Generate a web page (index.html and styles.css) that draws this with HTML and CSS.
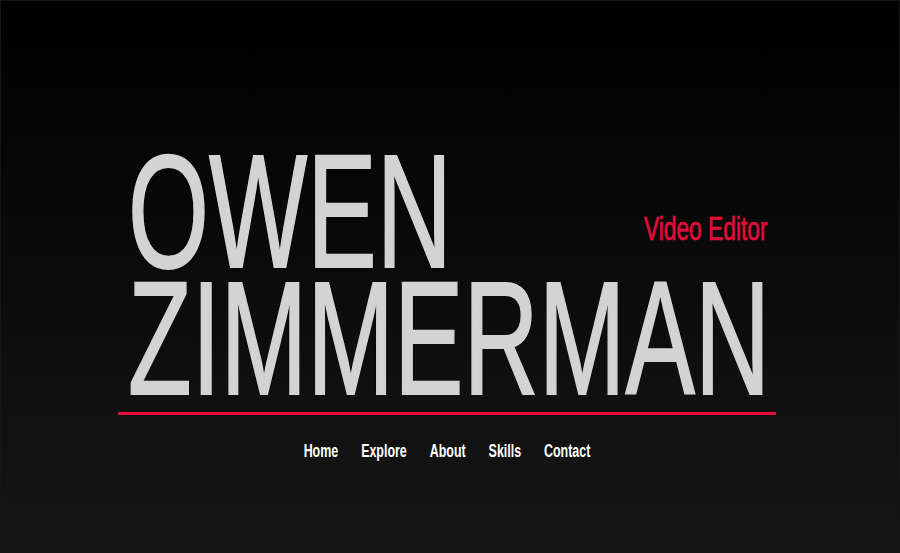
FILE: index.html
```html
<!DOCTYPE html>
<html lang="en">
<head>
<meta charset="utf-8">
<title>Owen Zimmerman — Video Editor</title>
<link rel="stylesheet" href="styles.css">
</head>
<body>
<main class="hero">
  <div class="wrap">
    <header class="title">
      <h1 class="name"><span class="line">OWEN</span><span class="line">ZIMMERMAN</span></h1>
      <p class="role"><span class="role-text">Video Editor</span></p>
    </header>
    <nav class="nav">
      <a href="#" class="nav-link">Home</a>
      <a href="#" class="nav-link">Explore</a>
      <a href="#" class="nav-link">About</a>
      <a href="#" class="nav-link">Skills</a>
      <a href="#" class="nav-link">Contact</a>
    </nav>
  </div>
</main>
</body>
</html>
```
FILE: styles.css
```css
html, body {
  margin: 0;
  padding: 0;
  height: 100%;
}
body {
  background: linear-gradient(180deg, #000000 0%, #161616 100%);
  font-family: "Liberation Sans", Arial, sans-serif;
  box-sizing: border-box;
  border: 1px solid #161616;
  overflow: hidden;
}
.hero {
  display: flex;
  justify-content: center;
  padding-top: 146px;
}
.wrap {
  width: 658px;
  margin-left: -6px;
}
.title {
  display: grid;
  grid-template-columns: minmax(0, 1fr);
  border-bottom: 3px solid #e50b3b;
  padding: 0 0 11px 10px;
}
.name {
  grid-area: 1 / 1;
  min-width: 0;
  margin: 0;
  display: flex;
  flex-direction: column;
  font-weight: 400;
  font-size: 162px;
  line-height: 127px;
  color: #d3d3d3;
  -webkit-text-stroke: 2px #d3d3d3;
  text-shadow: 0 0 1px #000, 0 0 2px #000;
  transform: scaleX(0.643);
  transform-origin: 0 0;
  white-space: nowrap;
}
.line {
  display: block;
}
.role {
  grid-area: 1 / 1;
  justify-self: end;
  align-self: start;
  margin: 61px 8px 0 0;
  font-size: 34px;
  line-height: 40px;
  color: #e50b3b;
  -webkit-text-stroke: 0.7px #e50b3b;
  white-space: nowrap;
}
.role-text {
  display: inline-block;
  transform: scaleX(0.67);
  transform-origin: 100% 0;
}
.nav {
  display: flex;
  justify-content: center;
  gap: 35px;
  padding-top: 24px;
  transform: scaleX(0.655);
  transform-origin: 50% 0;
}
.nav-link {
  color: #ffffff;
  text-decoration: none;
  font-weight: 700;
  font-size: 19px;
  line-height: 24px;
}
```
